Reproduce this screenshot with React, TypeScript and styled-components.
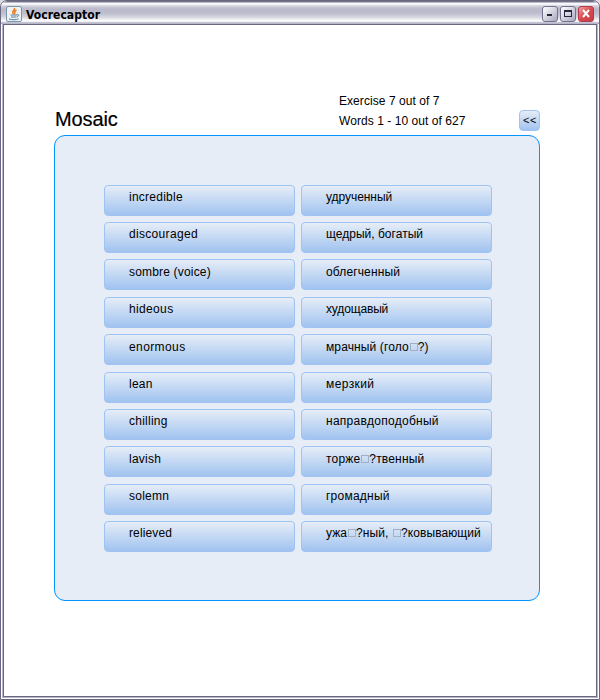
import React from "react";
import styled, { createGlobalStyle } from "styled-components";

const GlobalStyle = createGlobalStyle`
  * { box-sizing: border-box; }
  body { margin: 0; background: #dcdce4; }
`;

const Frame = styled.div`
  width: 600px;
  height: 700px;
  display: flex;
  flex-direction: column;
  overflow: hidden;
  border: 1px solid #69677f;
  border-radius: 7px 7px 0 0;
  background: #fff;
  font-family: "Liberation Sans", Arial, sans-serif;
  color: #000;
`;

const TitleBar = styled.header`
  flex: none;
  height: 23px;
  display: flex;
  align-items: center;
  padding: 3px 5px 0 5px;
  border-radius: 6px 6px 0 0;
  background: linear-gradient(#75738c 0 1px, #fbfbfd 2px 3px, #d2d2de 5px, #b9b9cb 8px, #bdbdce 12px, #d4d4df 16px, #fff 20px, #e5e5ec 21px, #a5a3ba 22px);
`;

const Caption = styled.h1`
  flex: 1;
  margin: 1px 0 0 4px;
  font: bold 12px/16px "DejaVu Sans Condensed", "DejaVu Sans", sans-serif;
  letter-spacing: 0.05px;
`;

const Controls = styled.div`
  display: flex;
  gap: 2px;
`;

const Control = styled.button<{ $close?: boolean }>`
  width: 16px;
  height: 16px;
  padding: 0;
  display: grid;
  place-items: center;
  border: 1px solid ${(p) => (p.$close ? "#b23a48" : "#72728f")};
  border-radius: 3px;
  background: ${(p) =>
    p.$close
      ? "linear-gradient(135deg, #eea0a0, #d84b50 50%, #c83c45)"
      : "linear-gradient(135deg, #fff, #d4d4e0 50%, #a5a5bf)"};
`;

const Content = styled.main`
  flex: 1;
  margin: 0 2px 2px;
  border: 1px solid #69677f;
  box-shadow: 0 0 0 1px #b8b6ca;
  padding: 66px 56px 0 50px;
  background: #fff;
`;

const Heading = styled.div`
  height: 44px;
  display: grid;
  grid-template-columns: 285px 1fr 21px;
  align-items: end;
`;

const Title = styled.h2`
  margin: 0 0 4px 1px;
  font-size: 20px;
  font-weight: 400;
  line-height: 24px;
  letter-spacing: -0.1px;
  -webkit-text-stroke: 0.2px #000;
`;

const Status = styled.div`
  font-size: 12px;
  line-height: 20px;
  padding-bottom: 4px;
`;

const StatusLine = styled.div`
  letter-spacing: 0.06px;
`;

const BackButton = styled.button`
  width: 21px;
  height: 21px;
  margin-bottom: 4px;
  padding: 0;
  border: 1px solid #9fc3f2;
  border-radius: 4px;
  background: linear-gradient(#e6edf7, #a0c3f0);
  font: 11px/19px "Liberation Sans", Arial, sans-serif;
  letter-spacing: 0.5px;
  text-indent: 1px;
  color: #000;
`;

const Board = styled.section`
  width: 486px;
  height: 466px;
  padding: 48.6px 47px 0 49px;
  border: 1px solid #0095ff;
  border-radius: 11px;
  background: #e6edf7;
`;

const Tiles = styled.div`
  display: grid;
  grid-template-columns: 191px 191px;
  grid-auto-rows: 31px;
  gap: 6.4px 6px;
`;

const Tile = styled.button<{ $spacing: number }>`
  padding: 0 0 6.3px 24px;
  border: 1px solid #9fc3f2;
  border-radius: 4px;
  background: linear-gradient(#e6edf7, #a0c3f0);
  font: 12px/14px "Liberation Sans", Arial, sans-serif;
  letter-spacing: ${(p) => p.$spacing}px;
  text-align: left;
  white-space: nowrap;
  color: #000;
`;

const MissingGlyph = styled.i`
  display: inline-block;
  width: 8px;
  height: 8px;
  margin: 0 0 0 1px;
  border: 1px solid #a3b0c2;
`;

type Word = [text: string, spacing: number];

const pairs: [Word, Word][] = [
  [["incredible", 0.25], ["удрученный", -0.05]],
  [["discouraged", 0.32], ["щедрый, богатый", 0.02]],
  [["sombre (voice)", 0.18], ["облегченный", 0.13]],
  [["hideous", 0.35], ["худощавый", -0.15]],
  [["enormous", 0.4], ["мрачный (голо□?)", 0.12]],
  [["lean", 0.25], ["мерзкий", 0.4]],
  [["chilling", 0.25], ["направдоподобный", 0.27]],
  [["lavish", 0.25], ["торже□?твенный", 0.18]],
  [["solemn", 0.25], ["громадный", 0.24]],
  [["relieved", 0.12], ["ужа□?ный, □?ковывающий", 0.09]],
];

function WordTile({ word: [text, spacing] }: { word: Word }) {
  return (
    <Tile $spacing={spacing}>
      {text.split("□").map((part, i) => (
        <React.Fragment key={i}>
          {i > 0 && <MissingGlyph />}
          {part}
        </React.Fragment>
      ))}
    </Tile>
  );
}

const JavaIcon = () => (
  <svg width="16" height="16" viewBox="0 0 16 16" fill="none">
    <rect x=".5" y=".5" width="15" height="15" rx="1.5" fill="#edf1f4" stroke="#7895ab" />
    <path d="M8.500 2C9.500 4.500 5 4.600 7.500 8M10.500 4C7.500 5.500 9.500 6.500 8.300 8.300" stroke="#ee7d20" strokeWidth="1.500" />
    <path d="M4.500 9h6.500M5 11h5.500M3 13c3 1 7 1 9.500-.2M11 8.700c2.500-.5 2 1.500 0 2" stroke="#5c7e9b" />
  </svg>
);

export default function App() {
  return (
    <>
      <GlobalStyle />
      <Frame>
        <TitleBar>
          <JavaIcon />
          <Caption>Vocrecaptor</Caption>
          <Controls>
            <Control aria-label="Minimize">
              <svg width="14" height="14"><path d="M4 7h5v2H4z" fill="#25253b" /></svg>
            </Control>
            <Control aria-label="Maximize">
              <svg width="14" height="14"><path d="M3 3h8v7H3zM4 5v4h6V5z" fillRule="evenodd" fill="#25253b" /></svg>
            </Control>
            <Control $close aria-label="Close">
              <svg width="14" height="14"><path d="M4 3l6 7M10 3l-6 7" stroke="#fff" strokeWidth="2" /></svg>
            </Control>
          </Controls>
        </TitleBar>
        <Content>
          <Heading>
            <Title>Mosaic</Title>
            <Status>
              <StatusLine>Exercise 7 out of 7</StatusLine>
              <StatusLine>Words 1 - 10 out of 627</StatusLine>
            </Status>
            <BackButton>&lt;&lt;</BackButton>
          </Heading>
          <Board>
            <Tiles>
              {pairs.map(([left, right]) => (
                <React.Fragment key={left[0]}>
                  <WordTile word={left} />
                  <WordTile word={right} />
                </React.Fragment>
              ))}
            </Tiles>
          </Board>
        </Content>
      </Frame>
    </>
  );
}
